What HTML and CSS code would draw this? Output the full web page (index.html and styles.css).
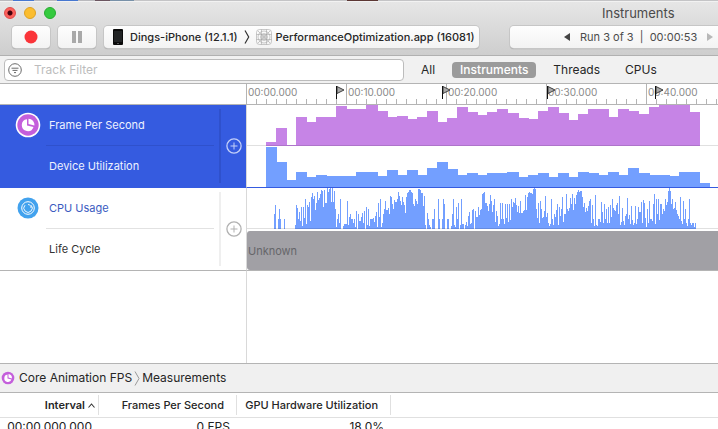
FILE: index.html
```html
<!DOCTYPE html>
<html lang="en">
<head>
<meta charset="utf-8">
<title>Instruments</title>
<link rel="stylesheet" href="styles.css">
</head>
<body>
<div class="desktop"></div>
<header class="chrome">
  <div class="titlebar">
    <div class="lights">
      <button class="light close" aria-label="Close"></button>
      <button class="light minimize" aria-label="Minimize"></button>
      <button class="light zoom" aria-label="Zoom"></button>
    </div>
    <h1 class="title">Instruments</h1>
  </div>
  <div class="toolbar">
    <button class="tool" aria-label="Record"><svg width="14" height="14" viewBox="0 0 14 14"><circle cx="7" cy="7" r="6.5" fill="#fa3439"/></svg></button>
    <button class="tool" aria-label="Pause"><svg width="12" height="14" viewBox="0 0 12 14"><path d="M1 1h4v12H1zM7 1h4v12H7z" fill="#a9a9a9"/></svg></button>
    <div class="target">
      <button class="crumb device"><svg width="10" height="16" viewBox="0 0 10 16"><rect width="10" height="16" rx="1" fill="#0b0b0b"/><rect x="1" y="2" width="8" height="11" fill="#222425"/><path d="M4 14.5h2" stroke="#555"/></svg>Dings-iPhone (12.1.1)</button>
      <svg class="sep" width="6" height="14" viewBox="0 0 6 14"><path d="M1 .5 4.700 7 1 13.500" fill="none" stroke="#333" stroke-width="1.200"/></svg>
      <button class="crumb app"><svg width="16" height="16" viewBox="0 0 16 16" fill="none" stroke="#a6a6a6" stroke-width=".6"><rect x=".5" y=".5" width="15" height="15" rx="3"/><path d="M5.500.5v15M10.500.5v15M.5 5.500h15M.5 10.500h15M2 2l12 12M14 2 2 14"/><circle cx="8" cy="8" r="6"/><circle cx="8" cy="8" r="3.500"/><circle cx="8" cy="8" r="1.500"/></svg>PerformanceOptimization.app (16081)</button>
    </div>
    <div class="run">
      <button class="step" aria-label="Previous run"><svg width="6" height="8" viewBox="0 0 6 8"><path d="M6 0v8L0 4z" fill="#444"/></svg></button>
      <span>Run 3 of 3 &nbsp;|&nbsp; 00:00:53</span>
      <button class="step" aria-label="Next run"><svg width="6" height="8" viewBox="0 0 6 8"><path d="M0 0v8l6-4z" fill="#b8b8b8"/></svg></button>
    </div>
  </div>
</header>

<div class="filterbar">
  <label class="search">
    <svg width="14" height="14" viewBox="0 0 14 14" fill="none" stroke="#6b6b6b"><circle cx="7" cy="7" r="6.300"/><path d="M3.500 5.200h7M4.500 7.400h5M6 9.600h2"/></svg>
    <input type="text" placeholder="Track Filter" aria-label="Track Filter">
  </label>
  <nav class="scopes">
    <button class="scope">All</button>
    <button class="scope active">Instruments</button>
    <button class="scope">Threads</button>
    <button class="scope">CPUs</button>
  </nav>
</div>

<main class="timeline">
  <div class="corner"></div>
  <div class="ruler">
    <span class="time">00:00.000</span><span class="time">00:10.000</span><span class="time">00:20.000</span><span class="time">00:30.000</span><span class="time">00:40.000</span>
    <svg class="flags" width="340" height="15" viewBox="0 0 340 15"><defs><g id="flag"><path d="M1 1.500 8 5 1 8.500z" fill="#aaa" stroke="#333" stroke-width=".9"/><path d="M.5 1v13" stroke="#111"/></g></defs><use href="#flag" x="0"/><use href="#flag" x="106"/><use href="#flag" x="211"/><use href="#flag" x="319"/></svg>
  </div>

  <section class="track selected">
    <svg class="badge" width="26" height="26" viewBox="0 0 26 26"><circle cx="13" cy="13" r="12.300" fill="#fff"/><circle cx="13" cy="13" r="10.700" fill="#c45fdb"/><path d="M12 7.200a6 6 0 1 0 6.500 7.800L12 13.500z" fill="#fff"/><path d="M13.500 6.700a6 6 0 0 1 5.800 6.800L13.500 12z" fill="#fff"/></svg>
    <div class="lanes"><div class="lane">Frame Per Second</div><div class="lane">Device Utilization</div></div>
    <button class="add" aria-label="Add graph"><svg width="16" height="16" viewBox="0 0 16 16" fill="none" stroke="currentColor"><circle cx="8" cy="8" r="7.100" stroke-width="1.300"/><path d="M8 4.500v7M4.500 8h7"/></svg></button>
  </section>
  <div class="plots selected">
    <svg class="plot" data-series="fps" height="41"></svg>
    <svg class="plot" data-series="gpu" height="41"></svg>
  </div>

  <section class="track">
    <svg class="badge" width="26" height="26" viewBox="0 0 26 26" fill="none" stroke="#fff"><circle cx="13" cy="13" r="10.500" fill="#42a2ee" stroke="none"/><circle cx="13" cy="13" r="6.300"/><path d="M10 10.200a4.200 4.200 0 1 0 6-.1M13 9.500a3 3 0 0 1 3 3.500" stroke-width=".9"/></svg>
    <div class="lanes"><div class="lane link">CPU Usage</div><div class="lane">Life Cycle</div></div>
    <button class="add" aria-label="Add graph"><svg width="16" height="16" viewBox="0 0 16 16" fill="none" stroke="currentColor"><circle cx="8" cy="8" r="7.100" stroke-width="1.300"/><path d="M8 4.500v7M4.500 8h7"/></svg></button>
  </section>
  <div class="plots">
    <svg class="plot" data-series="cpu" height="41"></svg>
    <div class="state">Unknown</div>
  </div>
  <div class="rest"></div><div class="rest right"></div>
</main>

<nav class="pathbar">
  <a href="#fps" class="step-link"><svg width="14" height="14" viewBox="0 0 14 14"><circle cx="7" cy="7" r="6.300" fill="#c45fdb"/><path d="M6.500 3.600a3.700 3.700 0 1 0 4 4.900L6.500 7.500z" fill="#fff"/><path d="M7.500 3.100a4 4 0 0 1 3.400 4.400l-3.400-1z" fill="#fff"/></svg>Core Animation FPS</a>
  <svg width="6" height="15" viewBox="0 0 6 15"><path d="M1 .5 5 7.500l-4 7" fill="none" stroke="#999"/></svg>
  <a href="#measurements">Measurements</a>
</nav>
<div class="detail">
  <table>
    <colgroup><col class="c1"><col class="c2"><col class="c3"><col></colgroup>
    <thead><tr>
      <th class="sorted"><span>Interval<svg width="7" height="5" viewBox="0 0 7 5"><path d="M.5 4.500l3-3.500 3 3.500" fill="none" stroke="#333" stroke-width="1.100"/></svg></span></th>
      <th><span>Frames Per Second</span></th><th><span>GPU Hardware Utilization</span></th><th></th>
    </tr></thead>
    <tbody><tr><td>00:00.000.000</td><td>0 FPS</td><td>18.0%</td><td></td></tr></tbody>
  </table>
</div>
<script src="charts.js"></script>
</body>
</html>
```
FILE: styles.css
```css
* { box-sizing: border-box; }
body {
  margin: 0;
  height: 100vh;
  display: flex;
  flex-direction: column;
  overflow: hidden;
  background: #fff;
  color: #262626;
  font: 12px/16px Inter, "Liberation Sans", sans-serif;
}
button { border: 0; padding: 0; margin: 0; background: none; font: inherit; color: inherit; }
a { color: inherit; text-decoration: none; }
svg { display: block; flex: none; }

.desktop {
  flex: none;
  height: 1px;
  background: linear-gradient(90deg, #b9b9bd 13px, #4677d0 13px 34px, #b9b9bd 34px 57px, #4677d0 57px 78px, #b9b9bd 78px 95px, #6b5560 95px 110px, #7891a8 110px 134px, #c4c4c6 134px 347px, #5c3734 347px 378px, #c4c4c6 378px);
}
.chrome {
  flex: none;
  border-top: 1px solid #f2f2f2;
  border-bottom: 1px solid #b1b1b1;
  background: linear-gradient(#e6e6e6, #cecece);
}
.titlebar { display: flex; align-items: center; height: 22px; padding-left: 4px; }
.lights { display: flex; gap: 8px; }
.light { width: 12px; height: 12px; border-radius: 50%; border: 1px solid; }
.close { background: radial-gradient(circle, #43000b 2px, #fc605c 3px); border-color: #de4a48; }
.minimize { background: #fbbd2f; border-color: #dea123; }
.zoom { background: #35ca3f; border-color: #28ac31; }
.title { margin: 0 0 0 546px; font-size: 13px; font-weight: 400; color: #4a4a4a; }
.toolbar { display: flex; gap: 8px; height: 31px; padding: 2px 0 7px 12px; white-space: nowrap; font-size: 11px; }
.tool, .target, .run {
  display: flex;
  align-items: center;
  border-radius: 4px;
  background: linear-gradient(#fefefe, #f3f3f3);
  box-shadow: 0 0 0 1px #c6c6c6, 0 1px 1px #8f8f8f;
}
.tool { flex: none; width: 38px; justify-content: center; }
.target { flex: none; width: 375px; padding-left: 9px; gap: 6px; font-weight: 500; }
.crumb { display: flex; align-items: center; }
.device { gap: 7px; }
.app { gap: 4px; }
.run { flex: 1; margin-left: 23px; padding-left: 54px; gap: 10px; border-radius: 4px 0 0 4px; color: #4b4b4b; }

.filterbar {
  flex: none;
  display: flex;
  align-items: center;
  height: 28px;
  padding-left: 4px;
  gap: 9px;
  background: #f1f1f1;
  border-bottom: 1px solid #b4b4b4;
}
.search {
  display: flex;
  align-items: center;
  width: 400px;
  height: 22px;
  padding-left: 3px;
  gap: 12px;
  border: 1px solid #bcbcbc;
  border-radius: 4px;
  background: #fff;
}
.search input { flex: 1; border: 0; padding: 0; outline: 0; background: none; font: inherit; }
.search input::placeholder { color: #bdbdbd; }
.scopes { display: flex; gap: 9px; }
.scope { padding: 0 8px; border-radius: 4px; }
.scope.active { background: #9b9b9b; color: #fff; font-weight: 500; }

.timeline {
  flex: 1;
  display: grid;
  grid-template-columns: 246px 1fr;
  grid-template-rows: 21px 83px 83px 1fr;
}
.corner { border-bottom: 1px solid #b4b4b4; }
.ruler {
  position: relative;
  display: flex;
  overflow: hidden;
  border-bottom: 1px solid #b4b4b4;
  background:
    repeating-linear-gradient(90deg, #b4b4b4 0 1px, transparent 1px 100px),
    repeating-linear-gradient(90deg, #b4b4b4 0 1px, transparent 1px 10px) 0 100% / 100% 5px no-repeat;
}
.time { flex: none; width: 100px; padding-left: 2px; font-size: 10px; color: #888; }
.flags { position: absolute; left: 90px; top: 1px; }
.track { display: flex; border-bottom: 1px solid #b4b4b4; color: #333; }
.badge { margin: 7px 0 0 15px; }
.lanes { flex: 1; padding-left: 5px; font-size: 11px; }
.lane { height: 41px; padding: 12px 0 0 3px; line-height: 17px; }
.lane:first-child { border-bottom: 1px solid #e2e2e2; }
.link { color: #3a5bbf; }
.add {
  width: 27px;
  margin: 4px 0 4px 5px;
  padding-left: 5px;
  border-left: 2px solid #efefef;
  color: #b1b1b1;
}
.track.selected { background: #355be0; color: #eef2ff; border-color: #355be0; }
.selected .lane:first-child, .selected .add { border-color: #2f51cc; }
.selected .add { color: #c4d0f8; }
.plots { border-left: 1px solid #d9d9d9; border-bottom: 1px solid #b4b4b4; overflow: hidden; }
.plots.selected { border-bottom-color: #355be0; }
.plot { width: 100%; }
.plot[data-series="fps"] path { fill: #c684e6; }
.plot[data-series="gpu"] path, .plot[data-series="cpu"] path { fill: #739fff; }
.baseline { fill: rgba(0, 0, 0, 0.12); }
.state {
  height: 39px;
  margin-top: 2px;
  padding: 12px 0 0 1px;
  border-radius: 3px 0 0 3px;
  background: #a1a0a5;
  color: #66666a;
  font-size: 11px;
}
.rest.right { border-left: 1px solid #d9d9d9; }

.pathbar {
  flex: none;
  display: flex;
  align-items: center;
  height: 30px;
  padding-left: 1px;
  gap: 2px;
  border: solid #b4b4b4;
  border-width: 1px 0;
  background: #f0f0f0;
}
.step-link { display: flex; align-items: center; gap: 4px; }
.detail { flex: none; height: 36px; overflow: hidden; }
table { width: 100%; table-layout: fixed; border-collapse: separate; border-spacing: 0; }
.c1 { width: 99px; }
.c2 { width: 138px; }
.c3 { width: 154px; }
th { height: 25px; padding: 2px 0; border-bottom: 1px solid #e0e0e0; font-size: 11px; font-weight: 500; text-align: right; white-space: nowrap; }
th span { display: flex; align-items: center; justify-content: flex-end; height: 20px; padding-right: 12px; border-right: 1px solid #e0e0e0; }
th.sorted { font-weight: 600; }
.sorted span { padding-right: 3px; gap: 3px; }
td { padding: 1px 7px 1px 0; text-align: right; color: #222; }
```
FILE: charts.js
```js
// Step series: [left, height] pairs, each level holding until the next left.
const steps = {
  fps: [[19,4],[29,18],[40,1],[49,29],[60,24],[69,29],[89,40],[100,37],[119,41],[131,35],[141,29],[150,30],[161,27],[170,29],[180,35],[191,24],[200,28],[210,39],[221,34],[231,31],[240,34],[250,37],[261,33],[272,28],[282,27],[291,35],[301,39],[312,33],[322,26],[331,32],[341,37],[362,29],[371,37],[382,35],[392,32],[402,39],[412,41],[443,34],[453,0]],
  gpu: [[19,40],[30,25],[40,7],[49,15],[60,10],[69,12],[80,11],[109,15],[131,11],[140,17],[151,12],[160,17],[171,12],[180,19],[190,25],[201,18],[211,12],[220,14],[231,12],[240,14],[260,15],[272,10],[281,12],[291,14],[302,10],[311,14],[322,10],[331,15],[342,14],[352,12],[361,15],[372,12],[381,19],[392,14],[403,12],[423,11],[432,15],[453,4],[463,0]]
};

// CPU samples, one per pixel column.
const cpuStart = 27;
const cpu = [15,24,0,0,10,20,10,0,0,0,10,0,0,0,0,0,0,0,0,0,0,4,24,21,10,17,8,22,3,22,11,30,5,24,22,27,8,32,36,30,33,19,26,37,29,31,35,39,38,22,39,26,26,41,37,40,41,27,41,27,38,20,2,10,15,6,30,0,0,3,5,5,5,28,4,12,15,10,10,6,10,2,18,0,15,8,8,12,16,6,18,0,22,4,20,3,10,10,10,11,7,13,17,2,26,12,30,2,6,15,20,28,19,19,21,15,33,32,25,20,29,27,27,30,37,33,
  28,24,32,27,24,16,32,36,37,39,39,37,36,25,23,30,28,25,40,40,39,36,36,23,33,4,0,16,10,4,2,0,10,10,20,0,0,0,30,10,0,0,10,30,25,0,0,10,10,0,0,3,15,30,4,2,22,10,26,0,4,30,5,5,0,4,7,3,13,17,5,6,19,20,0,18,12,12,22,14,19,20,35,36,37,26,26,23,18,25,34,28,17,24,30,7,18,13,3,5,
  26,10,26,10,5,25,11,25,7,25,9,30,22,27,26,31,24,17,23,16,28,16,16,18,19,34,19,32,36,37,36,36,35,40,41,40,20,11,26,6,28,20,11,12,18,33,12,16,6,3,5,30,10,4,15,12,19,25,4,22,13,20,32,7,15,15,35,20,18,21,31,25,35,19,31,25,34,37,39,37,38,38,32,22,26,17,21,18,23,28,30,6,24,10,3,34,4,3,10,10,
  7,27,17,6,25,10,20,6,22,6,24,12,30,21,19,18,24,26,15,33,4,7,21,8,4,13,15,31,10,14,5,23,9,4,6,23,5,10,22,17,17,27,6,29,26,11,2,20,6,28,10,10,8,25,35,5,30,15,30,9,25,25,15,20,18,30,24,27,38,41,38,25,30,20,21,27,19,15,13,10,32,8,5,28,10,20,6,3,10,30,6,4,6,6,2,6];
steps.cpu = cpu.map((h, i) => [cpuStart + i, h]).concat([[cpuStart + cpu.length, 0]]);

const make = (name, attributes) => {
  const node = document.createElementNS("http://www.w3.org/2000/svg", name);
  Object.entries(attributes).forEach(([key, value]) => node.setAttribute(key, value));
  return node;
};

document.querySelectorAll(".plot").forEach(svg => {
  const points = steps[svg.dataset.series];
  let d = `M${points[0][0]} 41`;
  points.forEach(([x, h]) => { d += `H${x}V${41 - h}`; });
  svg.append(make("path", { d: d + "V41Z" }));
  if (svg.dataset.series !== "gpu") {
    svg.append(make("rect", { class: "baseline", y: 40, width: "100%", height: 1 }));
  }
});
```
